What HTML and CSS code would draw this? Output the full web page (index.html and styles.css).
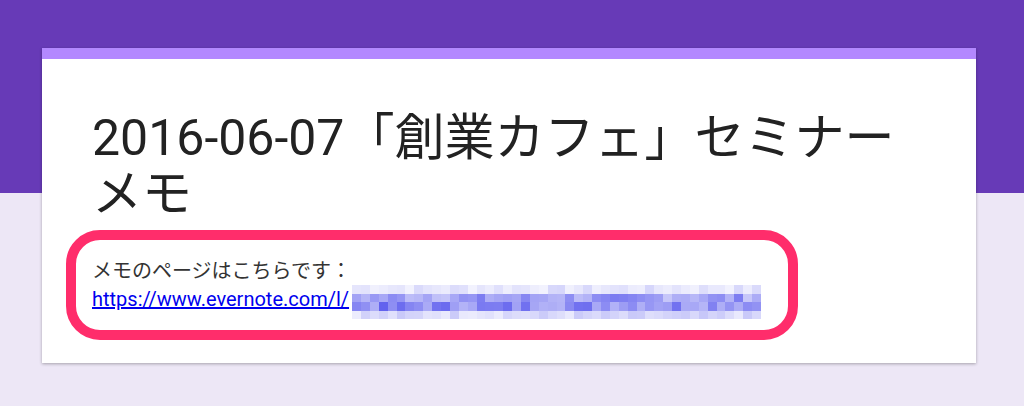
FILE: index.html
```html
<!doctype html>
<html lang="ja">
  <head>
    <meta charset="UTF-8" />
    <meta name="viewport" content="width=device-width, initial-scale=1.0" />
    <title>2016-06-07「創業カフェ」セミナーメモ</title>
    <link rel="stylesheet" href="styles.css">
  </head>
  <body>
    <!-- Form header card -->
    <div class="form-card">
      <div class="form-accent"></div>
      <div class="form-body">
        <h1 class="form-title">2016-06-07「創業カフェ」セミナーメモ</h1>

        <!-- Highlighted description -->
        <div class="form-desc">
          <p class="desc-text">メモのページはこちらです：</p>
          <p class="desc-link">
            <a href="#">https://www.evernote.com/l/</a><span class="blur" id="blur"></span>
          </p>
        </div>
      </div>
    </div>

    <script>
      // pixelated (mosaic) part of the shared link
      var rows = [
        [0.06, 0.22],
        [0.3, 0.72],
        [0.4, 0.85],
        [0.1, 0.3]
      ];
      var cols = 46;
      var seed = 7;
      function rand() {
        seed = (seed * 9301 + 49297) % 233280;
        return seed / 233280;
      }
      var blur = document.getElementById("blur");
      rows.forEach(function (r) {
        for (var i = 0; i < cols; i++) {
          var cell = document.createElement("i");
          var a = r[0] + (r[1] - r[0]) * rand();
          cell.style.background = "rgba(70, 70, 235, " + a.toFixed(2) + ")";
          blur.appendChild(cell);
        }
      });
    </script>
  </body>
</html>
```

FILE: styles.css
```css
/* Page */
body {
  margin: 0;
  font-family: "Roboto", "Noto Sans CJK JP", sans-serif;
  background: linear-gradient(#673ab7 0, #673ab7 193px, #ede7f6 193px);
  min-height: 406px;
  padding-top: 48px;
  box-sizing: border-box;
}

/* Card */
.form-card {
  margin-left: 42px;
  width: 934px;
  height: 315px;
  background-color: #fff;
  box-shadow: 0 1px 3px rgba(0, 0, 0, 0.3);
}

.form-accent {
  height: 11px;
  background-color: #b388ff;
}

.form-body {
  padding: 51px 50px 0;
}

.form-title {
  margin: 0;
  font-weight: 400;
  font-size: 50px;
  line-height: 56px;
  color: #222;
}

/* Annotation box round the description */
.form-desc {
  margin: 8px 0 0 -26px;
  width: 696px;
  height: 90px;
  border: 10px solid #ff2d6b;
  border-radius: 34px;
  padding-left: 16px;
}

.desc-text {
  margin: 18px 0 0;
  font-size: 20px;
  line-height: 26px;
  color: #333;
}

.desc-link {
  margin: 1px 0 0;
  display: flex;
  align-items: flex-start;
  font-size: 20px;
  line-height: 28px;
}

.desc-link a {
  color: #0000ee;
}

.blur {
  display: grid;
  grid-template-columns: repeat(46, 8.9px);
  grid-auto-rows: 8.5px;
  margin-left: 3px;
}

.blur i {
  display: block;
}
```
